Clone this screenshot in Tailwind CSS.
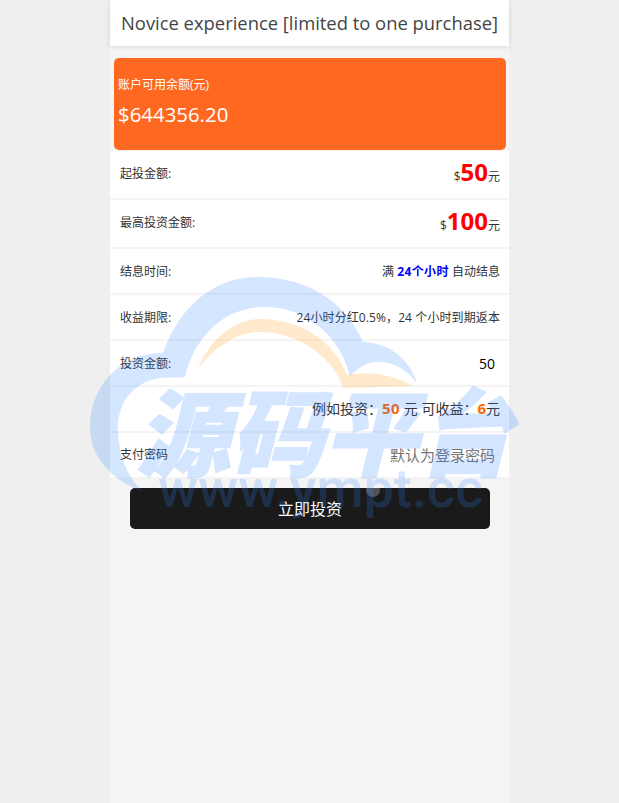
<!DOCTYPE html>
<html lang="en">
<head>
    <meta charset="UTF-8">
    <meta name="viewport" content="width=device-width, initial-scale=1.0">
    <title>Novice experience</title>
    <script src="https://cdn.jsdelivr.net/npm/@tailwindcss/browser@4"></script>
</head>
<body class="bg-[#efefef] h-[803px] overflow-hidden font-['Open_Sans','Noto_Sans_CJK_SC',sans-serif] text-[#333]">

    <div class="relative w-[399px] h-[803px] ml-[110px] bg-[#f4f4f4]">
        <!-- header -->
        <div class="h-[46px] bg-white shadow-[0_1px_5px_rgba(0,0,0,0.12)] flex items-center justify-center text-[18.4px] whitespace-nowrap text-[#444]">Novice experience [limited to one purchase]</div>

        <!-- balance -->
        <div class="mt-3 mx-1 w-[392px] h-[92px] bg-[#ff6820] rounded-[5px] text-white pl-1 pt-[19px]">
            <div class="text-[12px] leading-4">账户可用余额(元)</div>
            <div class="text-[20.4px] leading-7 mt-[7px]">$644356.20</div>
        </div>

        <!-- rows -->
        <div class="mt-px space-y-[2px]">
            <div class="h-[47px] bg-white flex items-center justify-between pl-2.5 pr-[9px] text-[12px]">
                <span class="-mt-[1px]">起投金额:</span>
                <span class="flex items-baseline -mt-[4px]"><span>$</span><b class="text-[24px] leading-none text-[#ff0000]">50</b><span>元</span></span>
            </div>
            <div class="h-[47px] bg-white flex items-center justify-between pl-2.5 pr-[9px] text-[12px]">
                <span class="-mt-[1px]">最高投资金额:</span>
                <span class="flex items-baseline -mt-[4px]"><span>$</span><b class="text-[24px] leading-none text-[#ff0000]">100</b><span>元</span></span>
            </div>
            <div class="h-[44px] bg-white flex items-center justify-between pl-2.5 pr-[9px] text-[12px] pt-[2px]">
                <span>结息时间:</span>
                <span>满 <b class="text-[#0000ff] tracking-[0.4px]">24个小时</b> 自动结息</span>
            </div>
            <div class="h-[44px] bg-white flex items-center justify-between pl-2.5 pr-[9px] text-[12px] pt-[2px]">
                <span>收益期限:</span>
                <span class="tracking-[0.1px]">24小时分红0.5%，24 个小时到期返本</span>
            </div>
            <div class="h-[44px] bg-white flex items-center justify-between pl-2.5 pr-[14px] text-[12px]">
                <span class="pt-[2px]">投资金额:</span>
                <span class="text-[14px] text-black">50</span>
            </div>
            <div class="h-[44px] bg-white flex items-center justify-end pr-[9px] text-[14px]">
                <span class="-mt-[2px]">例如投资：<b class="text-[15px] text-[#ff6a00] tracking-[0.5px]">50</b> 元 可收益：<b class="text-[15px] text-[#ff6a00]">6</b>元</span>
            </div>
            <div class="h-[44px] bg-white flex items-center justify-between pl-2.5 pr-[14px] text-[12px]">
                <span>支付密码</span>
                <span class="text-[15px] text-[#757575]">默认为登录密码</span>
            </div>
        </div>

        <button class="relative overflow-hidden block mt-[11px] ml-5 w-[360px] h-[41px] bg-[#1a1a1a] rounded-[5px] text-white text-[16px]">
            立即投资
            <span class="absolute left-[236px] top-[-5px] w-[14px] h-[14px] rounded-full bg-white/25"></span>
        </button>

        <!-- watermark, page coordinates -->
        <div class="absolute left-[-110px] top-0 w-[619px] h-[803px] pointer-events-none">
            <svg class="absolute inset-0" width="619" height="803" viewBox="0 0 619 803">
                <path d="M143 492C108 478 90 455 90 427C90 385 122 352 163 353C180 305 215 277 257 277C305 277 345 300 363 342C390 343 410 360 417 383C405 368 392 361 377 362C367 362 358 368 350 376C340 335 305 307 265 307C225 307 195 335 185 377C178 378 170 377 162 378C135 380 118 402 118 427C118 455 128 478 143 492Z" fill="rgba(50,133,255,0.205)"/>
                <path d="M198 368C210 340 233 319 260 319C300 319 333 340 347 375C372 370 395 376 413 386L343 388C335 360 300 332 260 332C235 332 215 348 198 368Z" fill="rgba(255,170,60,0.25)"/>
            </svg>
            <div class="absolute left-[136px] top-[378px] text-[94px] leading-[110px] font-black italic whitespace-nowrap text-[rgb(50,133,255)] opacity-[0.205] [-webkit-text-stroke:1.5px_rgb(50,133,255)]">源码平台</div>
            <div class="absolute left-[158px] top-[457px] text-[54px] leading-[64px] font-medium whitespace-nowrap text-[rgba(50,133,255,0.205)] font-['Roboto',sans-serif]">www.ympt.cc</div>
        </div>
    </div>

</body>
</html>
